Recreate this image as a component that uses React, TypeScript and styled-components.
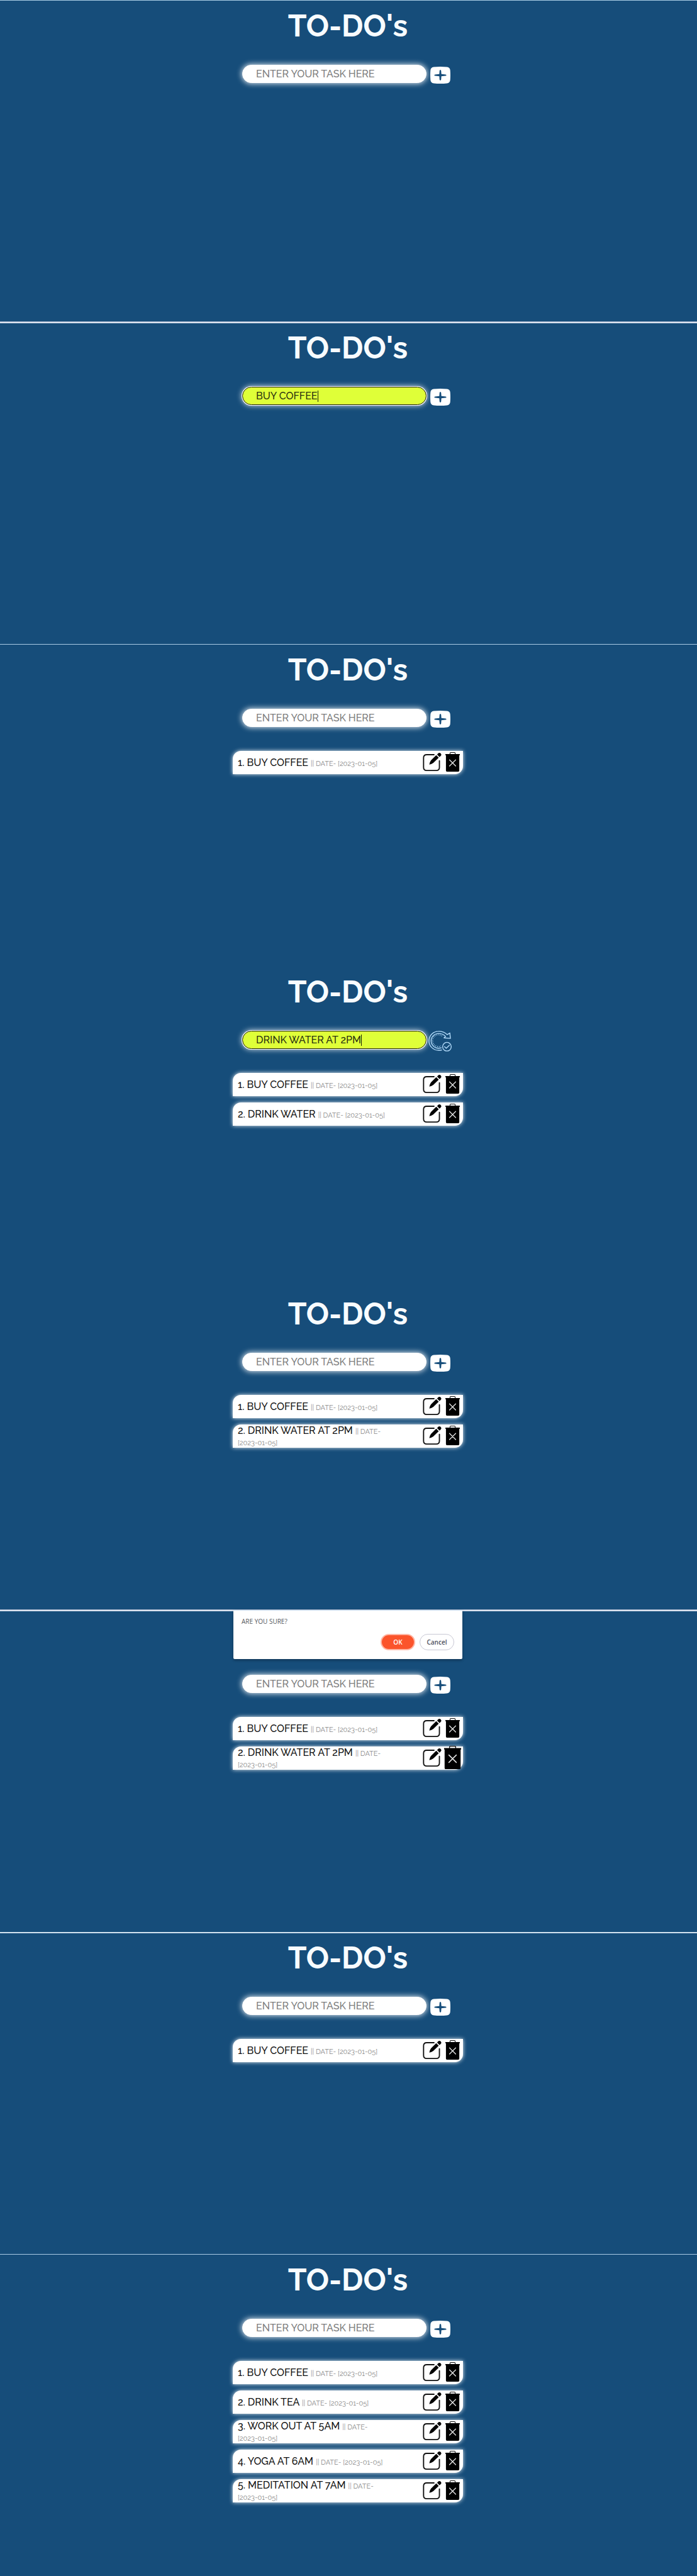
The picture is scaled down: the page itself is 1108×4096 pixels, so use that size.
import React, { useState } from 'react';
import styled, { createGlobalStyle, css } from 'styled-components';

const blue = '#164d7a';
const textFont = "Raleway, Inter, 'Liberation Sans', sans-serif";

const GlobalStyle = createGlobalStyle`
  *, *::before, *::after { box-sizing: border-box; }
  body { margin: 0; background: ${blue}; font-family: ${textFont}; }
  button { padding: 0; border: 0; background: none; font: inherit; cursor: pointer; }
`;

type Divider = 'none' | 'thin' | 'medium' | 'thick';

const dividers: Record<Divider, string> = {
  none: 'none',
  thin: 'inset 0 1px 0 #a9cbe4',
  medium: 'inset 0 2px 0 #d3e3f0',
  thick: '0 -1px 0 #a3b3cb, inset 0 2px 0 #dbe3f0',
};

const Screen = styled.section<{ $divider: Divider }>`
  position: relative;
  display: flex;
  flex-direction: column;
  align-items: center;
  min-height: 512px;
  box-shadow: ${(p) => dividers[p.$divider]};
`;

const Panel = styled.div`
  width: 368px;
  max-width: 100%;
  padding-right: 2px;
`;

const Header = styled.header`
  height: 103px;
`;

const Title = styled.h1`
  margin: 0;
  padding-top: 12px;
  color: #f8fcff;
  font: 700 48px/58px Raleway, Lato, 'Open Sans', sans-serif;
  text-align: center;
`;

const Dialog = styled.div`
  display: flex;
  flex-direction: column;
  justify-content: space-between;
  height: 78px;
  margin: 0 1px;
  padding: 11px 13px 14px;
  border-top: 1px solid #cfe2f2;
  border-radius: 0 0 2px 2px;
  background: #fff;
  box-shadow: 0 2px 4px rgba(0, 0, 0, 0.3);
  font-family: 'Open Sans', 'Noto Sans', sans-serif;
`;

const Question = styled.p`
  margin: 0;
  color: #555960;
  font-size: 10px;
  line-height: 12px;
`;

const Answers = styled.div`
  display: flex;
  justify-content: flex-end;
  gap: 7px;
`;

const AnswerButton = styled.button<{ $primary?: boolean }>`
  width: 55px;
  height: 26px;
  border-radius: 13px;
  font-size: 10px;
  font-weight: 600;
  ${(p) =>
    p.$primary
      ? css`
          border: 2px solid #ffb7a5;
          background: #fb542b;
          color: #fff;
        `
      : css`
          border: 1px solid #c8c8d4;
          background: #fff;
          color: #4b4e5c;
        `}
`;

const EntryForm = styled.form`
  display: flex;
  gap: 2px;
  height: 34px;
  margin-bottom: 33px;
  padding-left: 15px;
`;

const Field = styled.label<{ $active: boolean }>`
  display: flex;
  align-items: center;
  width: 293px;
  height: 29px;
  padding: 0 21px;
  border: 1px solid #fff;
  border-radius: 15px;
  background: #fff;
  box-shadow: 0 0 8px 1px rgba(255, 255, 255, 0.85);
  ${(p) =>
    p.$active &&
    css`
      border-color: #15180a;
      background: #dfff38;
      box-shadow: 0 0 0 1px #fff, 0 0 9px 1px rgba(255, 255, 255, 0.8);
    `}
`;

const TaskInput = styled.input<{ $active: boolean }>`
  flex: ${(p) => (p.$active ? 'none' : '1')};
  field-sizing: ${(p) => (p.$active ? 'content' : 'fixed')};
  min-width: 0;
  height: 20px;
  padding: 0;
  border: 0;
  outline: 0;
  background: none;
  color: #2a2f10;
  font: 500 16px/20px ${textFont};
  &::placeholder { color: #7d7d7d; opacity: 1; }
`;

const Caret = styled.span`
  width: 1px;
  height: 18px;
  background: #1b1f08;
`;

const SubmitButton = styled.button`
  display: grid;
  place-items: center;
  width: 39px;
  height: 33px;
`;

const TaskList = styled.ol`
  display: flex;
  flex-direction: column;
  gap: 10px;
  margin: 0;
  padding: 0;
  list-style: none;
`;

const TaskRow = styled.li`
  display: flex;
  align-items: center;
  justify-content: space-between;
  height: 37px;
  padding: 0 5px 0 8px;
  border-radius: 13px 0 13px 0;
  background: #fff;
  box-shadow: 0 0 6px rgba(255, 255, 255, 0.9);
`;

const TaskText = styled.p`
  width: 238px;
  margin: 0;
  color: #111;
  font-size: 16px;
  font-weight: 500;
  line-height: 18px;
`;

const TaskDate = styled.small`
  color: #8a8a8a;
  font: 400 11px/12px Raleway, Roboto, sans-serif;
`;

const Stamp = styled.time`
  white-space: nowrap;
`;

const Actions = styled.div`
  display: flex;
  gap: 6px;
  padding-bottom: 2px;
`;

const IconButton = styled.button<{ $hovered?: boolean }>`
  display: block;
  height: 31px;
  transform: ${(p) => (p.$hovered ? 'scale(1.2)' : 'none')};
  svg { display: block; }
`;

const PlusIcon = () => (
  <svg width="32" height="27" viewBox="0 0 116 98" aria-hidden="true">
    <path
      d="M20 2Q58-2 96 2Q114 4 115 22Q117 49 115 76Q114 94 96 96Q58 100 20 96Q2 94 1 76Q-1 49 1 22Q2 4 20 2Z"
      fill="#fff"
    />
    <path
      d="M58 19Q62 19 62.500 24L64 43L88 45Q93 46 93 49Q93 52 88 53L64 55L62.500 74Q62 79 58 79Q54 79 53.500 74L52 55L28 53Q23 52 23 49Q23 46 28 45L52 43L53.500 24Q54 19 58 19Z"
      fill={blue}
    />
  </svg>
);

const UpdateIcon = () => (
  <svg width="39" height="33" viewBox="0 0 142 120" fill="none" stroke="#b4dcfb" strokeWidth="5" aria-hidden="true">
    <path
      d="M82 111Q72 113 62 113A55 55 0 0 1 62 3Q92 2 112 22L128 13L131 44L94 41L103 33Q88 16 62 16A42 42 0 0 0 62 101Q72 101 80 98"
      strokeLinejoin="round"
    />
    <path d="M82 30A34 34 0 1 0 76 88" strokeWidth="7" strokeDasharray="3 7" />
    <circle cx="111" cy="92" r="25" fill={blue} />
    <path d="M97 92L107 101L125 84" strokeLinecap="round" />
  </svg>
);

const EditIcon = () => (
  <svg width="30" height="31" viewBox="0 0 112 114" aria-hidden="true">
    <path
      d="M67 14H24Q5 14 5 32V90Q5 108 24 108H80Q99 108 99 90V50"
      fill="none"
      stroke="#111"
      strokeWidth="7"
      strokeLinecap="round"
    />
    <path d="M39 73Q42 57 49 48L80 17L95 32L63 63Q53 71 39 73Z" fill="#000" />
    <path d="M85 13L92 6Q98 0 106 6Q114 14 107 21L100 28Z" fill="#000" />
  </svg>
);

const TrashIcon = () => (
  <svg width="23" height="31" viewBox="0 0 84 114" aria-hidden="true">
    <path d="M27 14V6Q27 2 31 2H53Q57 2 57 6V14" fill="none" stroke="#111" strokeWidth="4" />
    <path d="M0 11H84V18H81V108Q81 114 75 114H9Q3 114 3 108V18H0Z" fill="#000" />
    <path d="M24 45L60 81M60 45L24 81" stroke="#e4e4e4" strokeWidth="5" strokeLinecap="round" />
  </svg>
);

type ScreenData = {
  divider: Divider;
  draft?: string;
  updating?: boolean;
  confirming?: boolean;
  tasks: string[];
};

const DATE = '2023-01-05';

const screens: ScreenData[] = [
  { divider: 'thin', tasks: [] },
  { divider: 'thick', draft: 'BUY COFFEE', tasks: [] },
  { divider: 'thin', tasks: ['BUY COFFEE'] },
  { divider: 'none', draft: 'DRINK WATER AT 2PM', updating: true, tasks: ['BUY COFFEE', 'DRINK WATER'] },
  { divider: 'none', tasks: ['BUY COFFEE', 'DRINK WATER AT 2PM'] },
  { divider: 'thick', confirming: true, tasks: ['BUY COFFEE', 'DRINK WATER AT 2PM'] },
  { divider: 'medium', tasks: ['BUY COFFEE'] },
  {
    divider: 'thin',
    tasks: ['BUY COFFEE', 'DRINK TEA', 'WORK OUT AT 5AM', 'YOGA AT 6AM', 'MEDITATION AT 7AM'],
  },
];

const ConfirmDialog = () => (
  <Dialog role="dialog" aria-label="Confirm">
    <Question>ARE YOU SURE?</Question>
    <Answers>
      <AnswerButton type="button" $primary>OK</AnswerButton>
      <AnswerButton type="button">Cancel</AnswerButton>
    </Answers>
  </Dialog>
);

const Entry = ({ draft = '', updating }: { draft?: string; updating?: boolean }) => {
  const [value, setValue] = useState(draft);
  const active = draft !== '';
  return (
    <EntryForm onSubmit={(e) => e.preventDefault()}>
      <Field $active={active}>
        <TaskInput
          $active={active}
          aria-label="Task"
          placeholder="ENTER YOUR TASK HERE"
          value={value}
          onChange={(e) => setValue(e.target.value)}
        />
        {active && <Caret />}
      </Field>
      <SubmitButton type="submit" aria-label={updating ? 'Update task' : 'Add task'}>
        {updating ? <UpdateIcon /> : <PlusIcon />}
      </SubmitButton>
    </EntryForm>
  );
};

const Task = ({ index, name, removing }: { index: number; name: string; removing: boolean }) => (
  <TaskRow>
    <TaskText>
      {index}. {name}{' '}
      <TaskDate>
        || DATE- <Stamp dateTime={DATE}>[{DATE}]</Stamp>
      </TaskDate>
    </TaskText>
    <Actions>
      <IconButton type="button" aria-label={`Edit ${name}`}><EditIcon /></IconButton>
      <IconButton type="button" aria-label={`Delete ${name}`} $hovered={removing}><TrashIcon /></IconButton>
    </Actions>
  </TaskRow>
);

export default function App() {
  return (
    <>
      <GlobalStyle />
      <main>
        {screens.map((s, n) => (
          <Screen key={n} $divider={s.divider}>
            <Panel>
              <Header>{s.confirming ? <ConfirmDialog /> : <Title>TO-DO's</Title>}</Header>
              <Entry draft={s.draft} updating={s.updating} />
              <TaskList>
                {s.tasks.map((name, i) => (
                  <Task
                    key={name}
                    index={i + 1}
                    name={name}
                    removing={Boolean(s.confirming) && i === s.tasks.length - 1}
                  />
                ))}
              </TaskList>
            </Panel>
          </Screen>
        ))}
      </main>
    </>
  );
}
